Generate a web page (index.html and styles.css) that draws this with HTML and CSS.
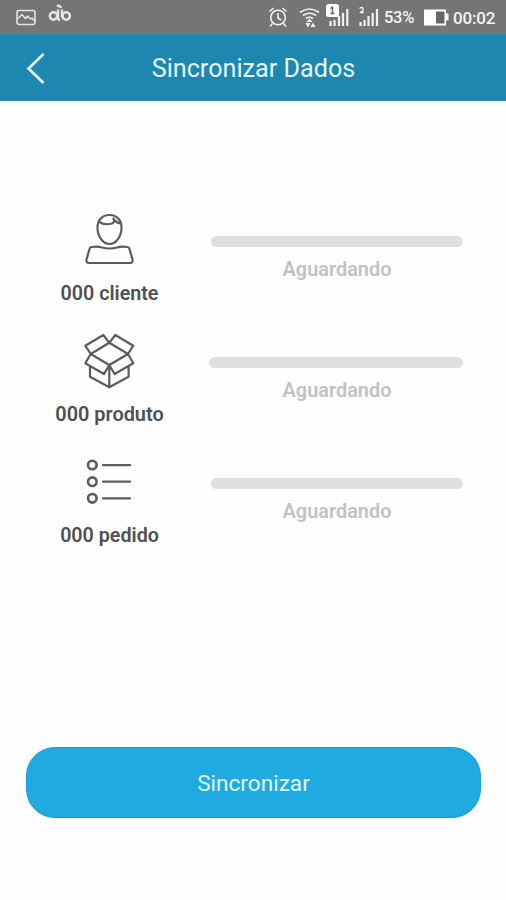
FILE: index.html
```html
<!DOCTYPE html>
<html lang="pt-BR">
<head>
<meta charset="utf-8">
<title>Sincronizar Dados</title>
<link rel="stylesheet" href="styles.css">
</head>
<body>
<div class="status">
  <svg class="notifications" width="76" height="34" viewBox="0 0 76 34" fill="none" stroke="#e4e4e4">
    <rect x="17" y="10.500" width="18" height="14" rx="2" stroke-width="1.600"/>
    <path d="M18 18.500l4-4 3.500 4 2-2.500 3 3 1.500-1 2.500 3" stroke-width="1.500"/>
    <circle cx="53.500" cy="16" r="3.700" stroke-width="2.500"/>
    <circle cx="66.200" cy="16" r="3.700" stroke-width="2.500"/>
    <path d="M58 9.500v8q0 2.500 2 2.500M62 9.500v8M57 6.500q2.500-2 4 1.500" stroke-width="2.400"/>
  </svg>
  <svg class="signals" width="116" height="34" viewBox="266 0 116 34" fill="none" stroke="#f0f0f0">
    <circle cx="278" cy="17.500" r="7.300" stroke-width="1.600"/>
    <path d="M278 13v5l3 2M269.500 11.500l4-3.500M286.500 11.500l-4-3.500M272.500 23.500l-2.500 3M283.500 23.500l2.500 3" stroke-width="1.600"/>
    <path d="M300 12.500q9.500-7 19 0M303 15.500q6.500-4.500 13 0M306 18.500q3.500-2.500 7 0" stroke-width="1.700"/>
    <path d="M309.500 18.500l3 3.500h-6zM305.500 23h5l-2.500 4.500zM310.500 27l2.500-4.500 2.500 4.500z" fill="#f0f0f0" stroke="none"/>
    <path d="M330.500 26v-5M334.500 26v-6M339 26v-10M343 26v-13M347.300 26V9M360.500 26v-4M364.500 26v-6M368.500 26v-10M372.700 26v-13M377 26V9" stroke-width="2.200"/>
    <rect x="326" y="4" width="13" height="13" rx="2.500" fill="#fff" stroke="none"/>
    <path d="M330.500 8.500l2-1.200v6M330.500 13.500h4" stroke="#666" stroke-width="1.500"/>
    <path d="M359.500 8.500q2.500-2 3.500 0t-3 4h4" stroke-width="1.300"/>
  </svg>
  <span class="percent">53%</span>
  <svg class="battery" width="27" height="34" viewBox="0 0 27 34">
    <path d="M1 9.500h22v4h2.500v7H23v5H1z" fill="#fff"/>
    <path d="M13 11.500h8.500v12H13z" fill="#666"/>
  </svg>
  <span class="clock">00:02</span>
</div>
<header class="header">
  <svg class="back" width="24" height="36" viewBox="0 0 24 36"><path d="M19.500 4L4.500 18.500 19.500 33" fill="none" stroke="#e2f7ff" stroke-width="2.700"/></svg>
  <h1 class="title">Sincronizar Dados</h1>
</header>
<main class="list">
  <section class="row">
    <div class="item">
      <svg class="icon" viewBox="0 0 60 60">
        <path d="M29.500 5C22 5 17.500 10 17.500 17.500c0 8.500 5 16.500 12 16.500s12-8 12-16.500C41.500 10 37 5 29.500 5z"/>
        <path d="M18.500 11.500c5 3.500 10 3 13.500 2q3-1 1.500-5 1.500 3.500 6.500 5"/>
        <path d="M12 37c5-1 7-.5 10 .5q7.500 2 15 0c3-1 5-1.500 10-.5q2 0 2.500 2l3 10.500q.5 3.500-2.500 3.500H9q-3 0-2.500-3.500l3-10.500q.5-2 2.500-2z"/>
      </svg>
      <span class="label">000 cliente</span>
    </div>
    <div class="progress"><div class="bar"></div><span class="state">Aguardando</span></div>
  </section>
  <section class="row">
    <div class="item">
      <svg class="icon" viewBox="0 0 60 60">
        <path d="M29.300 11.700L23.300 4 5.300 14.700l5.400 8.300zM29.300 11.700l6-7.700 18 10.700L48 23zM10.700 23l-5.400 9.300L24 43l5.300-9zM48 23l5.300 9.300L34.600 43l-5.300-9zM10.700 23l18.600 11L48 23M10 35.500v10.200l19.300 10.600 19.300-10.600V35.500M29.300 34v22"/>
      </svg>
      <span class="label label-wide">000 produto</span>
    </div>
    <div class="progress progress-wide"><div class="bar"></div><span class="state">Aguardando</span></div>
  </section>
  <section class="row">
    <div class="item">
      <svg class="icon" viewBox="0 0 60 60">
        <g stroke-width="2.600"><circle cx="12.300" cy="13" r="4.300"/><circle cx="12.300" cy="29.700" r="4.300"/><circle cx="12.300" cy="46.300" r="4.300"/></g>
        <path d="M23 13.200h27M23 29.700h27M23 46.300h27" stroke-linecap="round"/>
      </svg>
      <span class="label">000 pedido</span>
    </div>
    <div class="progress"><div class="bar"></div><span class="state">Aguardando</span></div>
  </section>
</main>
<footer class="footer"><button class="sync" type="button">Sincronizar</button></footer>
</body>
</html>
```
FILE: styles.css
```css
* { box-sizing: border-box; }
body {
  margin: 0;
  height: 900px;
  display: flex;
  flex-direction: column;
  background: #fefefe;
  font-family: Roboto, sans-serif;
}
.status {
  height: 34px;
  display: flex;
  align-items: center;
  background: #757575;
  color: #f4f4f4;
  line-height: 34px;
}
.signals { margin-left: 190px; }
.percent { width: 41px; padding-left: 2px; font-size: 16.500px; font-weight: 500; letter-spacing: -0.3px; padding-top: 2px; }
.clock { margin-left: 3px; font-size: 17px; font-weight: 500; letter-spacing: -0.2px; padding-top: 2px; }
.header {
  height: 67px;
  display: grid;
  grid-template-columns: 48px 1fr 48px;
  align-items: center;
  background: #1d87b0;
}
.back { margin-left: 24px; }
.title {
  margin: 0;
  padding: 2px 0 0 1px;
  color: #e2f7ff;
  font-size: 25.200px;
  font-weight: 400;
  text-align: center;
}
.list { padding-top: 109px; }
.row {
  height: 121px;
  display: grid;
  grid-template-columns: 219px 1fr;
}
.item { display: flex; flex-direction: column; align-items: center; }
.icon {
  width: 60px;
  height: 60px;
  fill: none;
  stroke: #5c5c5c;
  stroke-width: 2.200;
  stroke-linejoin: round;
}
.label { margin-top: 12px; color: #505050; font-size: 19.700px; font-weight: 600; line-height: 24px; }
.label-wide { font-size: 19.900px; }
.progress {
  margin: 26px 43px 0 -8px;
  display: flex;
  flex-direction: column;
  align-items: center;
}
.progress-wide { margin-left: -10px; }
.bar { width: 100%; height: 11px; border-radius: 6px; background: #dfdfdf; }
.state { margin-top: 11px; color: #c2c2c2; font-size: 19.900px; font-weight: 600; line-height: 24px; }
.progress-wide .state { padding-left: 2px; }
.footer { margin-top: auto; padding: 0 25px 82px 26px; }
.sync {
  display: block;
  width: 100%;
  height: 71px;
  padding-top: 2px;
  border: 1px solid #159fce;
  border-radius: 29px;
  background: #1fabe2;
  color: #e2f9ff;
  font: 400 22.600px Roboto, sans-serif;
}
```
